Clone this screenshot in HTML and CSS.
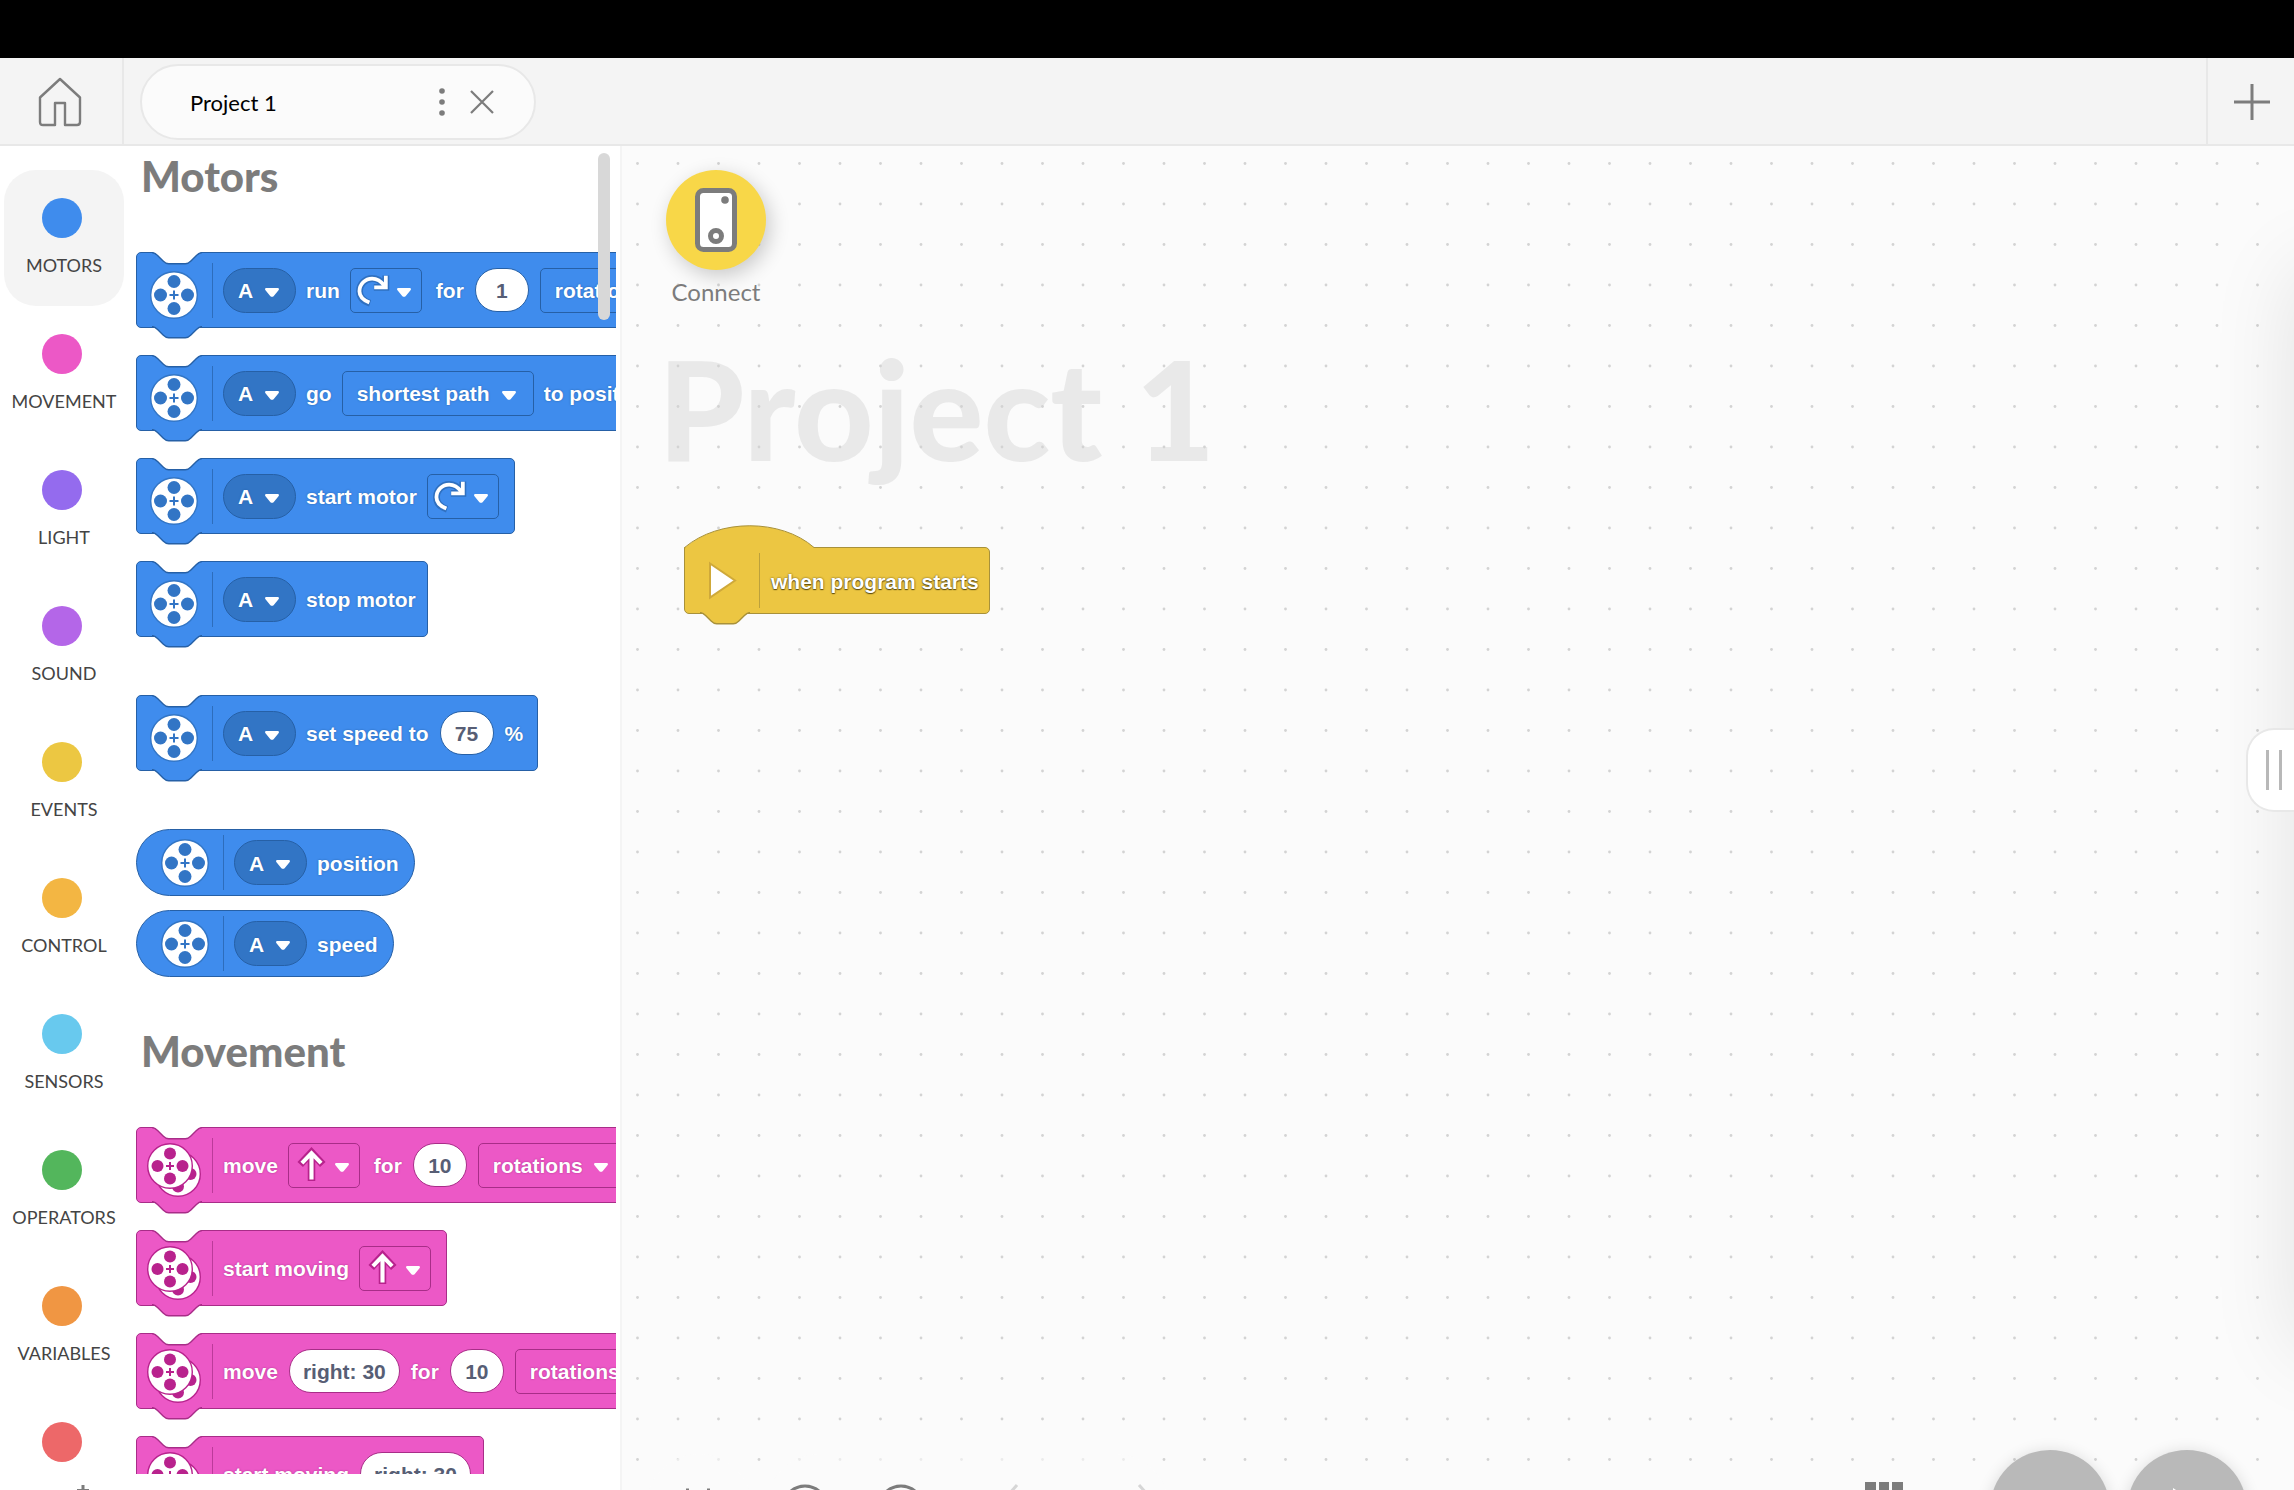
FILE: index.html
```html
<!DOCTYPE html>
<html lang="en">
<head>
<meta charset="utf-8">
<title>Project 1</title>
<link rel="stylesheet" href="styles.css">
</head>
<body>
<svg class="defs" aria-hidden="true">
  <symbol id="notch" viewBox="0 0 36 10">
    <path class="notch-fill" d="M0 -1V.4c2 0 3 1 4 2l4 4c1 1 2 2 4 2h12c2 0 3-1 4-2l4-4c1-1 2-2 4-2V-1z"/>
    <path class="notch-line" d="M0 .4c2 0 3 1 4 2l4 4c1 1 2 2 4 2h12c2 0 3-1 4-2l4-4c1-1 2-2 4-2"/>
  </symbol>
  <symbol id="caret" viewBox="0 0 14 9">
    <path fill="#fff" d="M1.600 0h10.800c1.500 0 2 1.200 1.100 2.300l-4.700 5.600c-1 1.200-2.600 1.200-3.600 0L.5 2.300C-.4 1.200.1 0 1.600 0z"/>
  </symbol>
  <symbol id="wheel" viewBox="0 0 48 48">
    <circle class="wheel-rim" cx="24" cy="24" r="23.300"/>
    <g class="wheel-hole"><circle cx="24" cy="10.500" r="6.500"/><circle cx="24" cy="37.500" r="6.500"/><circle cx="10.500" cy="24" r="6.500"/><circle cx="37.500" cy="24" r="6.500"/></g>
    <path class="wheel-plus" d="M24 19.500v9M19.500 24h9"/>
  </symbol>
  <symbol id="wheels" viewBox="0 0 56 56">
    <g transform="translate(9 8)"><circle class="wheel-rim" cx="23" cy="23" r="22.300"/><g class="wheel-hole"><circle cx="23" cy="35.500" r="6"/><circle cx="35.500" cy="23" r="6"/></g></g>
    <circle class="wheel-rim" cx="24" cy="23" r="22.300"/>
    <g class="wheel-hole"><circle cx="24" cy="10.500" r="6"/><circle cx="24" cy="35.500" r="6"/><circle cx="11.500" cy="23" r="6"/><circle cx="36.500" cy="23" r="6"/></g>
    <path class="wheel-plus" d="M24 19v8M20 23h8"/>
  </symbol>
  <symbol id="clockwise" viewBox="700 128 108 108">
    <g fill="none"><path stroke="#2f70c0" stroke-width="20" d="M744 219C722 212 713 199 713 184A37 37 0 0 1 750 147C764 147 775 153 784 166M790 138V173H755"/>
    <path stroke="#fff" stroke-width="11" d="M742 217C722 209 713 199 713 184A37 37 0 0 1 750 147C764 147 775 153 786 168M790 139V173H756"/></g>
  </symbol>
  <symbol id="forward" viewBox="519 414 108 108">
    <g fill="none"><path stroke="#b8228d" stroke-width="22" d="M573 513V440M540 465L573 430L606 465"/>
    <path stroke="#fff" stroke-width="12" d="M573 509V440M545 461L573 432L601 461"/></g>
  </symbol>
</svg>

<div class="status-bar"></div>

<header class="topbar">
  <button class="home" aria-label="Home">
    <svg width="44" height="50" viewBox="0 0 44 50" fill="none" stroke="#7c7c7c" stroke-width="2.400" stroke-linejoin="round"><path d="M22 2L42 20.500V45q0 3-3 3H27V26H17V48H5q-3 0-3-3V20.500z"/></svg>
  </button>
  <div class="tab">
    <span class="tab-name">Project 1</span>
    <button class="plain" aria-label="Project menu"><svg width="8" height="30" viewBox="0 0 8 30" fill="#7c7c7c"><circle cx="4" cy="4" r="2.800"/><circle cx="4" cy="15" r="2.800"/><circle cx="4" cy="26" r="2.800"/></svg></button>
    <button class="plain" aria-label="Close project"><svg width="24" height="24" viewBox="0 0 24 24" stroke="#7c7c7c" stroke-width="2.200"><path d="M1 1l22 22M23 1L1 23"/></svg></button>
  </div>
  <button class="add" aria-label="New project"><svg width="36" height="36" viewBox="0 0 36 36" stroke="#7c7c7c" stroke-width="3"><path d="M18 0v36M0 18h36"/></svg></button>
</header>

<main class="main">
  <aside class="palette">
    <div class="palette-body">
      <nav class="categories" aria-label="Block categories">
        <button class="category is-active"><i class="dot c-motors"></i>MOTORS</button>
        <button class="category"><i class="dot c-movement"></i>MOVEMENT</button>
        <button class="category"><i class="dot c-light"></i>LIGHT</button>
        <button class="category"><i class="dot c-sound"></i>SOUND</button>
        <button class="category"><i class="dot c-events"></i>EVENTS</button>
        <button class="category"><i class="dot c-control"></i>CONTROL</button>
        <button class="category"><i class="dot c-sensors"></i>SENSORS</button>
        <button class="category"><i class="dot c-operators"></i>OPERATORS</button>
        <button class="category"><i class="dot c-variables"></i>VARIABLES</button>
        <button class="category" aria-label="My blocks"><i class="dot c-blocks"></i></button>
      </nav>

      <div class="flyout">
        <h2>Motors</h2>
        <div class="stack">
          <div class="block blue">
            <svg class="notch notch-top"><use href="#notch"/></svg><svg class="notch notch-bottom"><use href="#notch"/></svg>
            <svg class="wheel"><use href="#wheel"/></svg><i class="rule"></i>
            <label class="field oval"><select aria-label="Port"><option>A</option></select><svg class="caret"><use href="#caret"/></svg></label>
            <span>run</span>
            <button class="field image" aria-label="Direction clockwise"><svg class="glyph"><use href="#clockwise"/></svg><svg class="caret"><use href="#caret"/></svg></button>
            <span>for</span>
            <input class="number" aria-label="Amount" value="1">
            <label class="field"><select aria-label="Unit"><option>rotations</option></select><svg class="caret"><use href="#caret"/></svg></label>
          </div>
          <div class="block blue">
            <svg class="notch notch-top"><use href="#notch"/></svg><svg class="notch notch-bottom"><use href="#notch"/></svg>
            <svg class="wheel"><use href="#wheel"/></svg><i class="rule"></i>
            <label class="field oval"><select aria-label="Port"><option>A</option></select><svg class="caret"><use href="#caret"/></svg></label>
            <span>go</span>
            <label class="field"><select aria-label="Path"><option>shortest path</option></select><svg class="caret"><use href="#caret"/></svg></label>
            <span>to position</span>
            <input class="number" aria-label="Position" value="0">
          </div>
          <div class="block blue">
            <svg class="notch notch-top"><use href="#notch"/></svg><svg class="notch notch-bottom"><use href="#notch"/></svg>
            <svg class="wheel"><use href="#wheel"/></svg><i class="rule"></i>
            <label class="field oval"><select aria-label="Port"><option>A</option></select><svg class="caret"><use href="#caret"/></svg></label>
            <span>start motor</span>
            <button class="field image" aria-label="Direction clockwise"><svg class="glyph"><use href="#clockwise"/></svg><svg class="caret"><use href="#caret"/></svg></button>
          </div>
          <div class="block blue">
            <svg class="notch notch-top"><use href="#notch"/></svg><svg class="notch notch-bottom"><use href="#notch"/></svg>
            <svg class="wheel"><use href="#wheel"/></svg><i class="rule"></i>
            <label class="field oval"><select aria-label="Port"><option>A</option></select><svg class="caret"><use href="#caret"/></svg></label>
            <span>stop motor</span>
          </div>
        </div>
        <div class="stack">
          <div class="block blue">
            <svg class="notch notch-top"><use href="#notch"/></svg><svg class="notch notch-bottom"><use href="#notch"/></svg>
            <svg class="wheel"><use href="#wheel"/></svg><i class="rule"></i>
            <label class="field oval"><select aria-label="Port"><option>A</option></select><svg class="caret"><use href="#caret"/></svg></label>
            <span>set speed to</span>
            <input class="number" aria-label="Speed" value="75">
            <span class="unit">%</span>
          </div>
        </div>
        <div class="stack reporters">
          <div class="block blue reporter">
            <svg class="wheel"><use href="#wheel"/></svg><i class="rule"></i>
            <label class="field oval"><select aria-label="Port"><option>A</option></select><svg class="caret"><use href="#caret"/></svg></label>
            <span>position</span>
          </div>
          <div class="block blue reporter">
            <svg class="wheel"><use href="#wheel"/></svg><i class="rule"></i>
            <label class="field oval"><select aria-label="Port"><option>A</option></select><svg class="caret"><use href="#caret"/></svg></label>
            <span>speed</span>
          </div>
        </div>

        <h2>Movement</h2>
        <div class="stack">
          <div class="block pink">
            <svg class="notch notch-top"><use href="#notch"/></svg><svg class="notch notch-bottom"><use href="#notch"/></svg>
            <svg class="wheels"><use href="#wheels"/></svg><i class="rule"></i>
            <span>move</span>
            <button class="field image" aria-label="Direction forward"><svg class="glyph"><use href="#forward"/></svg><svg class="caret"><use href="#caret"/></svg></button>
            <span>for</span>
            <input class="number" aria-label="Amount" value="10">
            <label class="field"><select aria-label="Unit"><option>rotations</option></select><svg class="caret"><use href="#caret"/></svg></label>
          </div>
          <div class="block pink">
            <svg class="notch notch-top"><use href="#notch"/></svg><svg class="notch notch-bottom"><use href="#notch"/></svg>
            <svg class="wheels"><use href="#wheels"/></svg><i class="rule"></i>
            <span>start moving</span>
            <button class="field image" aria-label="Direction forward"><svg class="glyph"><use href="#forward"/></svg><svg class="caret"><use href="#caret"/></svg></button>
          </div>
          <div class="block pink">
            <svg class="notch notch-top"><use href="#notch"/></svg><svg class="notch notch-bottom"><use href="#notch"/></svg>
            <svg class="wheels"><use href="#wheels"/></svg><i class="rule"></i>
            <span>move</span>
            <input class="number wide" aria-label="Steering" value="right: 30">
            <span>for</span>
            <input class="number" aria-label="Amount" value="10">
            <label class="field"><select aria-label="Unit"><option>rotations</option></select><svg class="caret"><use href="#caret"/></svg></label>
          </div>
          <div class="block pink">
            <svg class="notch notch-top"><use href="#notch"/></svg><svg class="notch notch-bottom"><use href="#notch"/></svg>
            <svg class="wheels"><use href="#wheels"/></svg><i class="rule"></i>
            <span>start moving</span>
            <input class="number wide" aria-label="Steering" value="right: 30">
          </div>
        </div>
        <div class="scrollbar"></div>
      </div>
    </div>
    <div class="palette-foot">
      <button class="extend" aria-label="Add extension"><svg width="12" height="12" viewBox="0 0 12 12" stroke="#7c7c7c" stroke-width="3"><path d="M6 0v12M0 5.500h12"/></svg></button>
    </div>
  </aside>

  <section class="canvas" aria-label="Programming canvas">
    <svg class="grid" aria-hidden="true">
      <defs><pattern id="dots" width="81" height="81" patternUnits="userSpaceOnUse" x="-5" y="-3"><g fill="#d3d3d3"><circle cx="20.500" cy="20.500" r="1.400"/><circle cx="61" cy="20.500" r="1.400"/><circle cx="20.500" cy="61" r="1.400"/><circle cx="61" cy="61" r="1.400"/></g></pattern></defs>
      <rect width="100%" height="100%" fill="url(#dots)"/>
    </svg>
    <div class="connect">
      <button class="connect-button" id="connect" aria-labelledby="connect-label">
        <svg width="42" height="64" viewBox="0 0 42 64"><rect x="2.500" y="2.500" width="37" height="59" rx="6" fill="#fff" stroke="#7c7c7c" stroke-width="5"/><circle cx="30" cy="12" r="3.800" fill="#7c7c7c"/><circle cx="21" cy="48" r="5.500" fill="#fff" stroke="#7c7c7c" stroke-width="5"/></svg>
      </button>
      <span class="connect-label" id="connect-label">Connect</span>
    </div>
    <h1>Project 1</h1>
    <div class="block yellow">
      <svg class="hat" width="132" height="24" viewBox="0 0 132 24"><path class="notch-fill" d="M1 24V22.500C35 -6.500 97 -6.500 130 22.500V24z"/><path class="notch-line" d="M.6 24V22.500C35 -6.500 97 -6.500 130 22.500"/></svg>
      <svg class="notch notch-bottom"><use href="#notch"/></svg>
      <svg class="play" width="30" height="44" viewBox="0 0 30 44"><path d="M1 4.500L26 21.500L1 38.500z" fill="#fff" stroke="#cfa93a" stroke-width="2"/></svg><i class="rule"></i>
      <span>when program starts</span>
    </div>

    <div class="side-panel"></div>
    <button class="side-handle" aria-label="Open side panel"><i></i><i></i></button>

    <div class="toolbar">
      <div class="pill round">
        <button class="plain" aria-label="Fit to screen"><svg width="44" height="44" viewBox="0 0 44 44" fill="none" stroke="#7c7c7c" stroke-width="3"><path d="M10.500 22V2.500M31.500 22V2.500"/></svg></button>
      </div>
      <div class="pill">
        <button class="plain" aria-label="Zoom out"><svg width="48" height="48" viewBox="0 0 48 48" fill="none" stroke="#7c7c7c" stroke-width="3"><circle cx="24" cy="24" r="22"/><path d="M14 24h20"/></svg></button>
        <button class="plain" aria-label="Zoom in"><svg width="48" height="48" viewBox="0 0 48 48" fill="none" stroke="#7c7c7c" stroke-width="3"><circle cx="24" cy="24" r="22"/><path d="M14 24h20M24 14v20"/></svg></button>
        <button class="plain history" aria-label="Undo"><svg width="48" height="48" viewBox="0 0 48 48" fill="none" stroke="#d6d6d6" stroke-width="3"><path d="M20 1L4 19l16 18"/></svg></button>
        <button class="plain history" aria-label="Redo"><svg width="48" height="48" viewBox="0 0 48 48" fill="none" stroke="#d6d6d6" stroke-width="3"><path d="M22 1l16 18-16 18"/></svg></button>
      </div>
      <button class="plain slots" aria-label="Program slots"><svg width="38" height="38" viewBox="0 0 38 38" fill="#7c7c7c"><path d="M0 0h11v11H0zM14 0h10v11H14zM27 0h11v11H27zM0 14h11v10H0zM14 14h10v10H14zM27 14h11v10H27z"/></svg></button>
      <button class="run" aria-label="Stop"></button>
      <button class="run" aria-label="Start"><svg width="44" height="48" viewBox="0 0 44 48" fill="#fff"><path d="M8 2l32 21L8 44z"/></svg></button>
    </div>
  </section>
</main>
</body>
</html>
```

FILE: styles.css
```css
* { box-sizing: border-box; }
body {
  margin: 0;
  height: 100vh;
  display: flex;
  flex-direction: column;
  overflow: hidden;
  background: #fff;
  font-family: Lato, "Liberation Sans", sans-serif;
}
button, input, select { font: inherit; color: inherit; margin: 0; padding: 0; border: 0; background: none; }
svg { display: block; flex: none; }
.defs { position: absolute; width: 0; height: 0; }
.plain { display: flex; }

/* top bar */
.status-bar { flex: none; height: 58px; background: #000; }
.topbar {
  flex: none;
  height: 88px;
  display: flex;
  align-items: center;
  background: #f4f4f4;
  border-bottom: 2px solid #e8e8e8;
}
.home {
  width: 124px;
  height: 100%;
  display: flex;
  align-items: center;
  padding: 2px 0 0 38px;
  border-right: 2px solid #e8e8e8;
}
.tab {
  width: 396px;
  height: 76px;
  margin: 2px 0 0 16px;
  display: flex;
  align-items: center;
  gap: 24px;
  padding: 0 40px 0 48px;
  border: 2px solid #e8e8e8;
  border-radius: 38px;
  background: #fbfbfb;
}
.tab-name { flex: 1; padding-top: 2px; font-size: 22px; line-height: 28px; color: #000; }
.add {
  width: 88px;
  height: 100%;
  margin-left: auto;
  display: flex;
  align-items: center;
  justify-content: center;
  padding: 2px 0 0 2px;
  border-left: 2px solid #e8e8e8;
}

/* palette */
.main { flex: 1; min-height: 0; display: flex; }
.palette { flex: none; width: 622px; display: flex; flex-direction: column; border-right: 2px solid #f4f4f4; }
.palette-body { flex: 1; min-height: 0; display: flex; overflow: hidden; }
.palette-foot { flex: none; height: 16px; overflow: hidden; }
.extend { display: flex; padding: 11px 0 0 77px; }
.categories { flex: none; width: 124px; padding: 24px 0 0 4px; }
.category {
  width: 120px;
  height: 136px;
  display: flex;
  flex-direction: column;
  align-items: center;
  gap: 15px;
  padding-top: 28px;
  border-radius: 32px;
  font-size: 18px;
  line-height: 24px;
  color: #444;
}
.category.is-active { background: #f4f4f4; }
.dot { flex: none; width: 40px; height: 40px; margin-right: 4px; border-radius: 50%; }
.c-motors { background: #3f8ced; }
.c-movement { background: #ec58c6; }
.c-light { background: #946bee; }
.c-sound { background: #b466e8; }
.c-events { background: #ecc742; }
.c-control { background: #f3b643; }
.c-sensors { background: #68c9ee; }
.c-operators { background: #53b65c; }
.c-variables { background: #f09643; }
.c-blocks { background: #ed6869; }

.flyout { position: relative; width: 492px; padding: 5px 0 0 12px; overflow: hidden; }
.flyout h2 { margin: 0 0 51px 5px; font-size: 42px; line-height: 50px; font-weight: 900; color: #7c7c7c; }
.stack { display: flex; flex-direction: column; align-items: flex-start; gap: 27px; margin-bottom: 58px; }
.reporters { gap: 14px; margin-bottom: 49px; }
.scrollbar { position: absolute; top: 7px; right: 6px; width: 12px; height: 167px; border-radius: 6px; background: #d8d8d8; }

/* blocks */
.block {
  position: relative;
  display: flex;
  align-items: center;
  gap: 10px;
  height: 76px;
  padding: 0 11px 0 14px;
  border: 1px solid var(--line);
  border-radius: 5px;
  background: var(--fill);
  color: #fff;
  font: bold 21px/24px "Liberation Sans", sans-serif;
  white-space: nowrap;
  text-shadow: 0 0 2px var(--line);
}
.block > * { flex: none; }
.block > span { padding-top: 2px; }
.blue { --fill: #3f8ced; --line: #2660a6; --deep: #3275c5; }
.pink { --fill: #ec58c6; --line: #a82d88; --deep: #b8228d; }
.yellow { --fill: #ecc642; --line: #a8913a; --deep: #cfa93a; }
.notch { position: absolute; left: 15px; width: 50px; height: 14px; overflow: visible; }
.notch-top { top: -1px; }
.notch-bottom { bottom: -13px; }
.notch-fill { fill: var(--fill); }
.notch-top { --fill: #fff; }
.notch-line { fill: none; stroke: var(--line); stroke-width: 1; }
.wheel { width: 48px; height: 48px; margin: 10px 1px 0 -1px; }
.wheels { width: 56px; height: 56px; margin: 12px -3px 0 -5px; }
.wheel-rim { fill: #fff; stroke: var(--deep); stroke-width: 1.400; }
.wheel-hole { fill: var(--deep); }
.wheel-plus { stroke: var(--deep); stroke-width: 2; }
.rule { width: 1px; height: 55px; margin-left: 3px; background: var(--line); opacity: .7; }
.field {
  display: flex;
  align-items: center;
  gap: 11px;
  height: 45px;
  padding: 0 17px 0 14px;
  border: 1px solid var(--line);
  border-radius: 5px;
}
.field select { appearance: none; outline: 0; padding-top: 2px; text-shadow: inherit; }
.oval { padding-right: 16px; border-radius: 23px; background: var(--deep); }
.image { gap: 5px; padding: 0 10px 0 4px; margin-right: 4px; }
.image .glyph { width: 37px; height: 37px; }
.caret { width: 14px; height: 9px; margin-top: 4px; }
.number {
  width: 54px;
  height: 44px;
  margin: 0 1px;
  padding-top: 2px;
  border: 1px solid var(--line);
  border-radius: 22px;
  background: #fff;
  color: #575e75;
  text-align: center;
  text-shadow: none;
}
.number.wide { width: 111px; }
.unit { margin-right: 3px; }
.reporter { height: 67px; padding: 0 15px 0 25px; border-radius: 34px; }
.reporter .wheel { margin-top: 0; }

/* canvas */
.canvas {
  position: relative;
  flex: 1;
  min-width: 0;
  display: flex;
  flex-direction: column;
  align-items: flex-start;
  padding: 24px 44px;
  background: #fbfbfb;
  overflow: hidden;
}
.grid { position: absolute; inset: 0; width: 100%; height: 100%; z-index: 1; pointer-events: none; }
.connect { position: relative; z-index: 2; display: flex; flex-direction: column; align-items: center; gap: 8px; width: 100px; }
.connect-button {
  width: 100px;
  height: 100px;
  display: flex;
  align-items: center;
  justify-content: center;
  border-radius: 50%;
  background: #f8d748;
  box-shadow: 4px 6px 20px rgba(0, 0, 0, .2);
}
.connect-label { font-size: 24px; line-height: 28px; color: #7c7c7c; }
.canvas h1 { margin: 18px 0 0 -8px; font-size: 138px; line-height: 168px; font-weight: 900; color: #e9e9e9; white-space: nowrap; }
.yellow { z-index: 2; gap: 11px; height: 67px; margin: 55px 0 0 18px; padding: 0 10px 0 24px; border-top-left-radius: 0; text-shadow: 0 0 2px #5c4a10, 0 1px 1px #5c4a10; }
.yellow .rule { margin-left: 9px; }
.hat { position: absolute; left: -1px; top: -23px; }
.side-panel { position: absolute; z-index: 2; left: 100%; top: 124px; bottom: 140px; width: 400px; box-shadow: 0 0 80px rgba(0, 0, 0, .1); }
.side-handle {
  position: absolute;
  z-index: 3;
  right: 0;
  top: 582px;
  width: 48px;
  height: 84px;
  display: flex;
  align-items: center;
  gap: 10px;
  padding-left: 18px;
  border: 2px solid #e8e8e8;
  border-right: 0;
  border-radius: 28px 0 0 28px;
  background: #fff;
}
.side-handle i { width: 3px; height: 40px; background: #b8b8b8; }

/* floating tools that run past the lower edge */
.toolbar { position: absolute; z-index: 2; left: 24px; right: 47px; bottom: -84px; height: 124px; display: flex; align-items: flex-start; }
.pill { display: flex; align-items: center; gap: 48px; height: 108px; margin: 4px 0 0 14px; padding: 0 4px 0 15px; border-radius: 54px; background: rgba(252, 252, 252, .6); }
.round { margin-left: 0; padding: 0 31px; }
.history { margin-left: 24px; }
.slots { margin: 32px 70px 0 auto; }
.run {
  width: 120px;
  height: 120px;
  margin-left: 17px;
  display: flex;
  align-items: center;
  justify-content: center;
  border-radius: 50%;
  background: #b9b9b9;
  box-shadow: 0 2px 16px rgba(0, 0, 0, .14);
}
```
